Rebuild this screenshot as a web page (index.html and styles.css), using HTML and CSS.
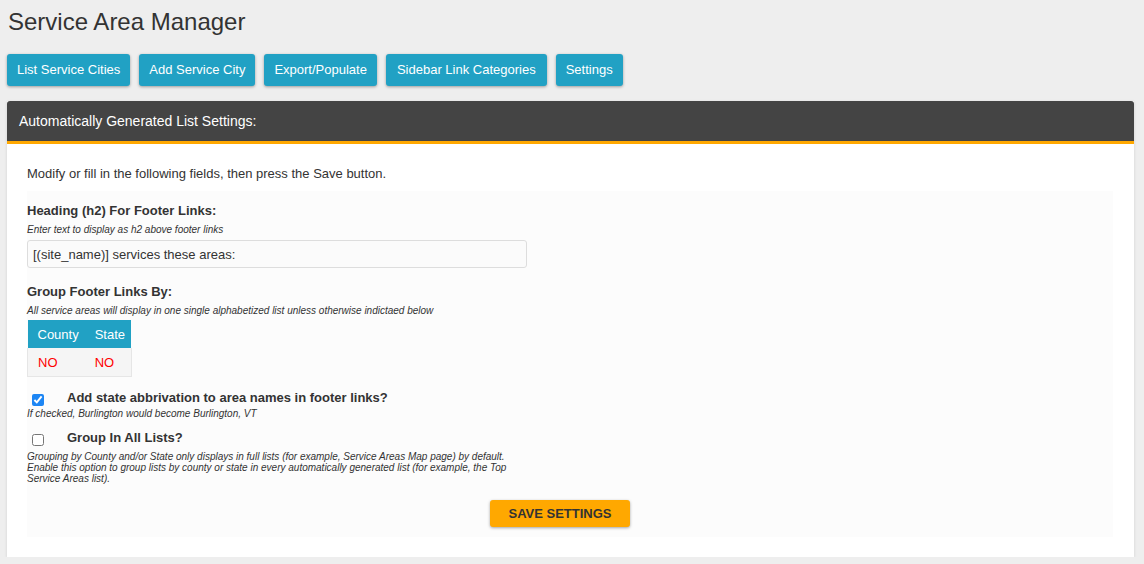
FILE: index.html
```html
<!DOCTYPE html>
<html lang="en">
<head>
    <meta charset="UTF-8">
    <title>Service Area Manager</title>
    <link rel="stylesheet" href="styles.css">
</head>
<body>
    <h1 class="page-title">Service Area Manager</h1>
    <nav class="tab-bar">
        <a href="#" class="btn">List Service Cities</a>
        <a href="#" class="btn">Add Service City</a>
        <a href="#" class="btn">Export/Populate</a>
        <a href="#" class="btn">Sidebar Link Categories</a>
        <a href="#" class="btn">Settings</a>
    </nav>
    <div class="panel">
        <div class="panel-head">Automatically Generated List Settings:</div>
        <div class="panel-body">
            <p class="intro">Modify or fill in the following fields, then press the Save button.</p>
            <form class="settings-box">
                <div class="field">
                    <label class="field-label">Heading (h2) For Footer Links:</label>
                    <div class="hint">Enter text to display as h2 above footer links</div>
                    <input type="text" class="text-input" value="[(site_name)] services these areas:">
                </div>
                <div class="field field-table">
                    <label class="field-label">Group Footer Links By:</label>
                    <div class="hint">All service areas will display in one single alphabetized list unless otherwise indictaed below</div>
                    <table class="group-table">
                        <tr><th>County</th><th>State</th></tr>
                        <tr><td>NO</td><td>NO</td></tr>
                    </table>
                </div>
                <div class="check-field">
                    <div class="check-row">
                        <input type="checkbox" checked>
                        <span class="check-label">Add state abbrivation to area names in footer links?</span>
                    </div>
                    <div class="hint">If checked, Burlington would become Burlington, VT</div>
                </div>
                <div class="check-field">
                    <div class="check-row">
                        <input type="checkbox">
                        <span class="check-label">Group In All Lists?</span>
                    </div>
                    <div class="hint hint-wide">Grouping by County and/or State only displays in full lists (for example, Service Areas Map page) by default. Enable this option to group lists by county or state in every automatically generated list (for example, the Top Service Areas list).</div>
                </div>
                <div class="actions">
                    <button type="button" class="save-btn">SAVE SETTINGS</button>
                </div>
            </form>
        </div>
    </div>
</body>
</html>
```

FILE: styles.css
```css
body {
    font-family: 'Liberation Sans', Arial, sans-serif;
    background: #eeeeee;
    margin: 0;
    padding: 0 10px 0 7px;
    color: #333;
}
.page-title {
    margin: 0;
    padding: 8px 0 0 1px;
    font-size: 24px;
    font-weight: normal;
    line-height: 28px;
    color: #333;
}
.tab-bar {
    display: flex;
    gap: 9px;
    margin-top: 18px;
}
.btn {
    background-color: #21a1c4;
    color: white;
    text-decoration: none;
    font-size: 13px;
    line-height: 16px;
    padding: 8px 10px;
    border-radius: 3px;
    box-shadow: 0 1px 3px rgba(0, 0, 0, 0.35);
}
.btn:nth-child(4) {
    padding: 8px 11px;
}
.panel {
    margin-top: 15px;
    background: white;
    box-shadow: 0 1px 3px rgba(0, 0, 0, 0.12);
}
.panel-head {
    background-color: #444;
    color: white;
    font-size: 14px;
    line-height: 40px;
    padding: 0 12px;
    border-bottom: 3px solid #ffa800;
    border-radius: 3px 3px 0 0;
}
.panel-body {
    padding: 22px 21px 20px 20px;
}
.intro {
    margin: 0 0 9px;
    font-size: 13px;
    line-height: 16px;
}
.settings-box {
    background: #fcfcfc;
    padding: 12px 0 10px;
}
.field {
    margin-bottom: 16px;
}
.field-table {
    margin-bottom: 13px;
}
.field-label {
    display: block;
    font-weight: bold;
    font-size: 13px;
    line-height: 16px;
}
.hint {
    font-style: italic;
    font-size: 10px;
    line-height: 11px;
    color: #333;
    margin-top: 5px;
}
.text-input {
    display: block;
    box-sizing: border-box;
    width: 500px;
    height: 28px;
    margin-top: 5px;
    padding: 0 5px;
    font-family: inherit;
    font-size: 13px;
    color: #333;
    background: #fbfbfb;
    border: 1px solid #ddd;
    border-radius: 3px;
}
.group-table {
    margin-top: 4px;
    border-collapse: collapse;
    font-size: 13px;
}
.group-table th {
    background: #21a1c4;
    color: white;
    font-weight: normal;
    height: 28px;
    padding: 0 6px 0 10px;
    text-align: left;
}
.group-table td {
    background: #f5f5f5;
    color: #ff0000;
    height: 28px;
    padding: 0 6px 0 10px;
    border: 1px solid #e6e6e6;
    border-width: 0 0 1px;
}
.group-table tr td:first-child { border-left-width: 1px; }
.group-table tr td:last-child { border-right-width: 1px; }
.check-field {
    margin-bottom: 11px;
}
.check-row {
    display: flex;
    align-items: center;
    gap: 23px;
}
.check-row input {
    margin: 3px 0 0 5px;
    width: 12px;
    height: 12px;
    accent-color: #1d86f4;
}
.check-label {
    font-weight: bold;
    font-size: 13px;
    line-height: 16px;
}
.check-field .hint {
    margin-top: 2px;
}
.check-field .hint-wide {
    max-width: 485px;
    margin-top: 5px;
}
.actions {
    text-align: center;
    padding: 5px 20px 0 0;
}
.save-btn {
    background: #ffa800;
    color: #333;
    border: none;
    border-radius: 3px;
    font-family: inherit;
    font-weight: bold;
    font-size: 13px;
    padding: 0 18px;
    height: 27px;
    box-shadow: 0 1px 3px rgba(0, 0, 0, 0.35);
    cursor: pointer;
}
```
